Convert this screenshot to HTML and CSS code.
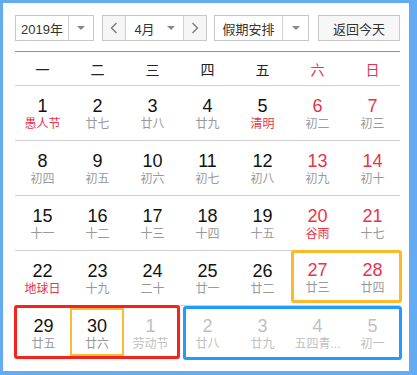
FILE: index.html
```html
<!DOCTYPE html>
<html lang="zh-CN">
<head>
  <meta charset="UTF-8" />
  <title>万年历</title>
  <link rel="stylesheet" href="styles.css">
</head>
<body>
  <div class="calendar">
    <!-- 顶部控制栏 -->
    <div class="toolbar">
      <div class="select year-select">
        <span class="select-text">2019年</span>
        <span class="select-arrow"><i class="tri"></i></span>
      </div>
      <div class="month-group">
        <span class="nav-btn">
          <svg width="8" height="12" viewBox="0 0 8 12"><polyline points="6.5,1 1.5,6 6.5,11" fill="none" stroke="#777" stroke-width="1.3"/></svg>
        </span>
        <div class="month-select">
          <span class="select-text">4月</span>
          <span class="month-arrow"><i class="tri"></i></span>
        </div>
        <span class="nav-btn">
          <svg width="8" height="12" viewBox="0 0 8 12"><polyline points="1.5,1 6.5,6 1.5,11" fill="none" stroke="#777" stroke-width="1.3"/></svg>
        </span>
      </div>
      <div class="select holiday-select">
        <span class="select-text">假期安排</span>
        <span class="select-arrow"><i class="tri"></i></span>
      </div>
      <button class="today-btn">返回今天</button>
    </div>

    <!-- 星期标题 -->
    <div class="weekdays">
      <span>一</span><span>二</span><span>三</span><span>四</span><span>五</span>
      <span class="weekend">六</span><span class="weekend">日</span>
    </div>

    <div class="week">
      <div class="day"><b>1</b><em class="fest">愚人节</em></div>
      <div class="day"><b>2</b><em>廿七</em></div>
      <div class="day"><b>3</b><em>廿八</em></div>
      <div class="day"><b>4</b><em>廿九</em></div>
      <div class="day"><b>5</b><em class="fest">清明</em></div>
      <div class="day weekend"><b>6</b><em>初二</em></div>
      <div class="day weekend"><b>7</b><em>初三</em></div>
    </div>
    <div class="week">
      <div class="day"><b>8</b><em>初四</em></div>
      <div class="day"><b>9</b><em>初五</em></div>
      <div class="day"><b>10</b><em>初六</em></div>
      <div class="day"><b>11</b><em>初七</em></div>
      <div class="day"><b>12</b><em>初八</em></div>
      <div class="day weekend"><b>13</b><em>初九</em></div>
      <div class="day weekend"><b>14</b><em>初十</em></div>
    </div>
    <div class="week">
      <div class="day"><b>15</b><em>十一</em></div>
      <div class="day"><b>16</b><em>十二</em></div>
      <div class="day"><b>17</b><em>十三</em></div>
      <div class="day"><b>18</b><em>十四</em></div>
      <div class="day"><b>19</b><em>十五</em></div>
      <div class="day weekend"><b>20</b><em class="fest">谷雨</em></div>
      <div class="day weekend"><b>21</b><em>十七</em></div>
    </div>
    <div class="week">
      <div class="day"><b>22</b><em class="fest">地球日</em></div>
      <div class="day"><b>23</b><em>十九</em></div>
      <div class="day"><b>24</b><em>二十</em></div>
      <div class="day"><b>25</b><em>廿一</em></div>
      <div class="day"><b>26</b><em>廿二</em></div>
      <div class="box box-orange">
        <div class="box-inner">
          <div class="day weekend"><b>27</b><em>廿三</em></div>
          <div class="day weekend"><b>28</b><em>廿四</em></div>
        </div>
      </div>
    </div>
    <div class="week last">
      <div class="box box-red">
        <div class="day fit"><b>29</b><em>廿五</em></div>
        <div class="day fit today"><b>30</b><em>廿六</em></div>
        <div class="day fit other"><b>1</b><em>劳动节</em></div>
      </div>
      <div class="box box-blue">
        <div class="box-inner">
          <div class="day other"><b>2</b><em>廿八</em></div>
          <div class="day other"><b>3</b><em>廿九</em></div>
          <div class="day other"><b>4</b><em>五四青...</em></div>
          <div class="day other"><b>5</b><em>初一</em></div>
        </div>
      </div>
    </div>
  </div>
</body>
</html>
```

FILE: styles.css
```css
body {
  margin: 0;
  padding: 0;
  background: #63abf2; /* 外框的蓝色 */
  font-family: "Liberation Sans", "Noto Sans CJK SC", sans-serif;
  width: 417px;
  height: 375px;
  overflow: hidden;
}

.calendar {
  margin: 3px 0 0 3px;
  width: 406px;
  height: 368px;
  background: #fff;
  padding: 12px 0 0 12px;
  box-sizing: border-box;
  overflow: hidden;
}

/* 顶部控制栏 */
.toolbar {
  display: flex;
  align-items: center;
  height: 26px;
  font-size: 13px;
  color: #333;
}

.select {
  display: flex;
  height: 26px;
  border: 1px solid #c8c8c8;
  box-sizing: border-box;
  background: #fff;
}

.select-text {
  flex: 1;
  display: flex;
  align-items: center;
  justify-content: center;
}

.select-arrow {
  width: 24px;
  border-left: 1px solid #d0d0d0;
  display: flex;
  align-items: center;
  justify-content: center;
}

.tri {
  width: 0;
  height: 0;
  border-left: 4px solid transparent;
  border-right: 4px solid transparent;
  border-top: 4px solid #888;
}

.year-select {
  width: 79px;
}

.month-group {
  display: flex;
  margin-left: 8px;
  width: 105px;
  height: 26px;
  border: 1px solid #c8c8c8;
  box-sizing: border-box;
}

.nav-btn {
  width: 22px;
  background: #f5f5f5;
  display: flex;
  align-items: center;
  justify-content: center;
}

.month-select {
  flex: 1;
  display: flex;
  background: #fff;
  border-left: 1px solid #d0d0d0;
  border-right: 1px solid #d0d0d0;
}

.month-select .select-text {
  padding-left: 4px;
}

.month-arrow {
  width: 24px;
  display: flex;
  align-items: center;
  justify-content: center;
}

.holiday-select {
  margin-left: 7px;
  width: 95px;
}

.holiday-select .select-arrow {
  width: 25px;
}

.today-btn {
  margin-left: 9px;
  width: 82px;
  height: 26px;
  border: 1px solid #c8c8c8;
  background: #f7f7f7;
  font-family: inherit;
  font-size: 13px;
  color: #333;
  padding: 0;
}

/* 星期标题 */
.weekdays {
  display: flex;
  width: 385px;
  margin-top: 10px;
  height: 35px;
  border-top: 1px solid #5aa2e8;
  border-bottom: 1px solid #cfcfcf;
  box-sizing: border-box;
  font-size: 14px;
  color: #222;
}

.weekdays span {
  width: 55px;
  display: flex;
  align-items: center;
  justify-content: center;
}

.weekdays .weekend {
  color: #e8334a;
}

/* 日期行 */
.week {
  display: flex;
  width: 385px;
  height: 55px;
  border-bottom: 1px solid #cfcfcf;
  box-sizing: border-box;
}

.week.last {
  border-bottom: none;
}

.day {
  width: 55px;
  flex: none;
  display: flex;
  flex-direction: column;
  align-items: center;
  padding-top: 10px;
  box-sizing: border-box;
}

.day b {
  font-weight: normal;
  font-size: 18px;
  line-height: 20px;
  color: #111;
}

.day em {
  font-style: normal;
  font-size: 12px;
  line-height: 17px;
  color: #999;
  white-space: nowrap;
}

.day.weekend b {
  color: #e8334a;
}

.day em.fest {
  color: #e8334a;
}

.day.other b,
.day.other em {
  color: #c0c0c0;
}

/* 高亮框 */
.box {
  box-sizing: border-box;
  border-radius: 3px;
  border: 3px solid;
  display: flex;
}

.box-inner {
  display: flex;
  flex: none;
}

.box-orange {
  border-color: #fdb928;
  margin: -1px 0 0 1px;
  width: 111px;
  height: 53px;
}

.box-orange .box-inner {
  margin-left: -4px;
}

.box-orange .day {
  padding-top: 7px;
}

.box-red {
  border-color: #f4231b;
  margin: -1px 0 0 -1px;
  width: 166px;
  height: 54px;
}

.box-red .day.fit {
  width: 53px;
  padding-top: 8px;
}

.box-red .day.today {
  width: 54px;
  border: 2px solid #fdbb33;
  padding-top: 6px;
}

.box-blue {
  border-color: #1f9cfd;
  margin-left: 3px;
  width: 219px;
  height: 54px;
}

.box-blue .box-inner {
  margin-left: -6px;
}

.box-blue .day {
  padding-top: 7px;
}
```
